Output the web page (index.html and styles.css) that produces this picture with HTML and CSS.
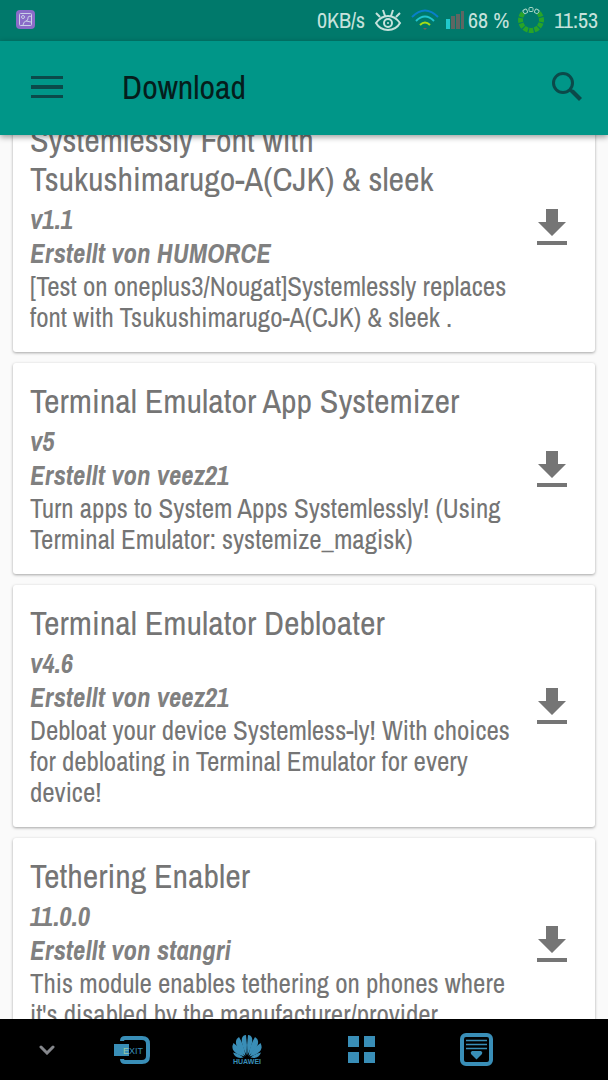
FILE: index.html
```html
<!DOCTYPE html>
<html lang="de">
<head>
<meta charset="utf-8">
<meta name="viewport" content="width=device-width, initial-scale=1">
<title>Download</title>
<link rel="stylesheet" href="styles.css">
</head>
<body>
<svg class="defs" width="0" height="0" aria-hidden="true">
  <symbol id="download" viewBox="0 0 30 36"><path d="M9 0h12v13h8L15 27 1 13h8zM0 32h30v4H0z"/></symbol>
</svg>
<div class="status-bar">
  <svg class="status-app" viewBox="0 0 19 19">
    <rect width="19" height="19" rx="4" fill="#8a6bc8"/>
    <g fill="none" stroke="#c9d0e8"><rect x="3.5" y="3.500" width="12" height="12" rx="1"/><circle cx="7" cy="7" r="1.500"/><path d="M7 15q1-4 3-4t2-3 4-1M10 11l5 1"/></g>
  </svg>
  <span class="rate">0KB/s</span>
  <svg class="eye" viewBox="0 0 28 24" fill="none" stroke="#c6e2dc" stroke-width="2">
    <path d="M2 15Q7 8 14 8t12 7Q22 22 14 22T2 15zM6 9 2 5M11 8 9 2M17 8l2-6M22 9l4-4"/><circle cx="14" cy="15" r="4"/><circle cx="14" cy="15" r="1" fill="#c6e2dc" stroke="none"/>
  </svg>
  <svg class="wifi" viewBox="0 0 28 22" fill="none" stroke-width="2">
    <path d="M1 8Q14-5 27 8" stroke="#087fca"/><path d="M5 12Q14 3 23 12" stroke="#20c5cf"/><path d="M9 16q5-5 10 0" stroke="#a4dc16"/><path d="M12 19h4l-2 2z" fill="#71605f"/>
  </svg>
  <svg class="signal" viewBox="0 0 18 18"><path d="M0 8h4v10H0z" fill="#20c9cc"/><path d="M5 5h4v13H5zM10 3h4v15h-4zM15 0h3v18h-3z" fill="#5e6662"/></svg>
  <span class="percent">68 %</span>
  <svg class="battery" viewBox="0 0 28 28">
    <g fill="none" stroke="#a7d6c4"><rect x="12" y="1.500" width="4" height="4" rx="1"/><rect x="6" y="3.500" width="4" height="4" rx="1" transform="rotate(-30 8 5)"/><rect x="18" y="3.500" width="4" height="4" rx="1" transform="rotate(30 20 5)"/></g>
    <circle cx="14" cy="14" r="10.500" pathLength="120" transform="rotate(-43 14 14)" class="charge"/>
  </svg>
  <time class="clock">11:53</time>
</div>
<header class="toolbar">
  <button class="icon-button" aria-label="Menü"><svg class="menu-icon" viewBox="0 0 32 22"><path d="M0 0h32v3H0zM0 9h32v4H0zM0 19h32v3H0z"/></svg></button>
  <h1 class="page-title">Download</h1>
  <button class="icon-button" aria-label="Suchen"><svg class="search-icon" viewBox="0 0 30 30"><circle cx="11" cy="11" r="9.500" fill="none" stroke="#0b4a4a" stroke-width="3"/><path d="m17 19 2-2 3 1 8 8-3 3-8-8z"/></svg></button>
</header>
<main class="content">
  <div class="module-list">
    <article class="card">
      <div class="module"><h2 class="name">Systemlessly Font with Tsukushimarugo-A(CJK) &amp; sleek</h2><p class="meta">v1.1</p><p class="meta">Erstellt von HUMORCE</p><p class="description">[Test on oneplus3/Nougat]Systemlessly replaces font with Tsukushimarugo-A(CJK) &amp; sleek .</p></div>
      <button class="download" aria-label="Download"><svg class="download-icon"><use href="#download"/></svg></button>
    </article>
    <article class="card">
      <div class="module"><h2 class="name">Terminal Emulator App Systemizer</h2><p class="meta">v5</p><p class="meta">Erstellt von veez21</p><p class="description">Turn apps to System Apps Systemlessly! (Using Terminal Emulator: systemize_magisk)</p></div>
      <button class="download" aria-label="Download"><svg class="download-icon"><use href="#download"/></svg></button>
    </article>
    <article class="card">
      <div class="module"><h2 class="name">Terminal Emulator Debloater</h2><p class="meta">v4.6</p><p class="meta">Erstellt von veez21</p><p class="description">Debloat your device Systemless-ly! With choices for debloating in Terminal Emulator for every device!</p></div>
      <button class="download" aria-label="Download"><svg class="download-icon"><use href="#download"/></svg></button>
    </article>
    <article class="card">
      <div class="module"><h2 class="name">Tethering Enabler</h2><p class="meta">11.0.0</p><p class="meta">Erstellt von stangri</p><p class="description">This module enables tethering on phones where it's disabled by the manufacturer/provider</p></div>
      <button class="download" aria-label="Download"><svg class="download-icon"><use href="#download"/></svg></button>
    </article>
  </div>
</main>
<nav class="nav-bar" aria-label="Navigation">
  <button class="nav-button hide" aria-label="Ausblenden"><svg class="chevron" viewBox="0 0 16 10"><path d="m2 2 6 6 6-6" fill="none" stroke="#85878c" stroke-width="3" stroke-linecap="round"/></svg></button>
  <button class="nav-button" aria-label="Exit"><svg class="exit" viewBox="0 0 36 28"><path d="M8 5q0-3 3-3h17q6 0 6 6v12q0 6-6 6H11q-3 0-3-3" fill="none" stroke="#398eb7" stroke-width="4"/><path d="M0 8h15v12H0z" fill="#398eb7"/><text x="9" y="18" class="exit-text"><tspan fill="#9bc9a4">E</tspan>XIT</text></svg></button>
  <button class="nav-button" aria-label="Huawei"><svg class="huawei" viewBox="0 0 30 30" fill="#398eb7">
    <g id="petals"><path d="M14.500 20C11 13 9 7 10 3q1-3 4-3 1.500 9 .5 20z"/><path d="M13.500 21C8 16 3 11 4 6q0-2 3-4 5 8 6.500 19z"/><path d="M12.500 21.500C6 20 1 17 .5 13q-.5-2 1-5 8 6 11 13.500z"/><path d="M11.500 22.500q-8 2-10.500-5 6 1 10.500 5z"/></g><use href="#petals" transform="matrix(-1 0 0 1 30 0)"/><text x="15" y="29" class="huawei-text" text-anchor="middle">HUAWEI</text>
  </svg></button>
  <button class="nav-button" aria-label="Apps"><svg class="apps" viewBox="0 0 27 27" fill="#398eb7"><path d="M0 0h11v11H0zM16 0h11v11H16zM0 16h11v11H0zM16 16h11v11H16z"/></svg></button>
  <button class="nav-button" aria-label="Benachrichtigungen"><svg class="drawer" viewBox="0 0 33 33" fill="none" stroke="#398eb7"><rect x="2" y="2" width="29" height="29" rx="4" stroke-width="4"/><path d="M6 7.500h21M6 11.500h21M6 15.500h21" stroke-width="1.500"/><path d="M12 18h9q2 1 1 3l-5.500 5.500L11 21q-1-2 1-3z" fill="#398eb7" stroke="none"/></svg></button>
</nav>
</body>
</html>
```
FILE: styles.css
```css
* { box-sizing: border-box; }
body {
  margin: 0;
  height: 100vh;
  display: flex;
  flex-direction: column;
  overflow: hidden;
  background: #fafafa;
  color: #757575;
  font-family: "Archivo Narrow", "Liberation Sans Narrow", "Roboto Condensed", "Liberation Sans", sans-serif;
}
h1, h2, p { margin: 0; }
button { padding: 0; border: 0; background: none; font: inherit; }
svg { display: block; flex: none; }
.defs { position: absolute; }
.status-bar {
  flex: none;
  height: 41px;
  display: flex;
  align-items: center;
  padding: 0 10px 2px 16px;
  background: #00796b;
  color: #c6e2dc;
  font-size: 22px;
}
.status-app { width: 19px; height: 19px; }
.rate { margin-left: auto; }
.eye { width: 28px; height: 24px; margin-left: 9px; }
.wifi { width: 28px; height: 22px; margin-left: 9px; }
.signal { width: 18px; height: 18px; margin-left: 7px; }
.percent { margin-left: 4px; }
.battery { width: 28px; height: 28px; margin-left: 8px; }
.charge {
  fill: none;
  stroke: #28a428;
  stroke-width: 5;
  stroke-dasharray: 8 2 8 2 8 2 8 2 8 2 8 2 8 2 8 2 8 32;
}
.clock { margin-left: 9px; }
.toolbar {
  flex: none;
  position: relative;
  z-index: 1;
  height: 94px;
  display: flex;
  align-items: center;
  padding: 0 26px 2px 31px;
  background: #009688;
  box-shadow: 0 2px 6px rgba(0, 0, 0, .4);
}
.menu-icon { width: 32px; height: 22px; fill: #0b4a4a; }
.page-title { flex: 1; margin-left: 59px; color: #051d1c; font-size: 34px; font-weight: 400; }
.search-icon { width: 30px; height: 30px; fill: #0b4a4a; }
.content { flex: 1; min-height: 0; overflow: hidden; }
.module-list { display: grid; gap: 11px; padding: 0 13px; margin-top: -33px; }
.card {
  display: flex;
  align-items: center;
  padding: 19px 28px 19px 17px;
  border-radius: 3px;
  background: #fff;
  box-shadow: 0 1px 3px rgba(0, 0, 0, .35);
}
.module { flex: 1; min-width: 0; }
.name { margin-bottom: 3px; font-size: 34px; line-height: 39px; font-weight: 400; }
.meta { font-size: 27px; line-height: 34px; font-weight: 700; font-style: italic; color: #808080; }
.description { margin-top: 1px; font-size: 27px; line-height: 31px; }
.download { margin-left: 14px; }
.download-icon { width: 30px; height: 36px; fill: #757575; }
.nav-bar {
  flex: none;
  height: 61px;
  display: grid;
  grid-template-columns: 74fr repeat(4, 115fr) 74fr;
  background: #000;
}
.nav-button { display: grid; place-items: center; }
.hide { padding-left: 20px; }
.chevron { width: 16px; height: 10px; }
.exit { width: 36px; height: 28px; }
.exit-text { font: 9px "Liberation Sans", sans-serif; fill: #398eb7; }
.huawei { width: 30px; height: 30px; }
.huawei-text { font: bold 7px "Liberation Sans", sans-serif; }
.apps { width: 27px; height: 27px; }
.drawer { width: 33px; height: 33px; }
```
